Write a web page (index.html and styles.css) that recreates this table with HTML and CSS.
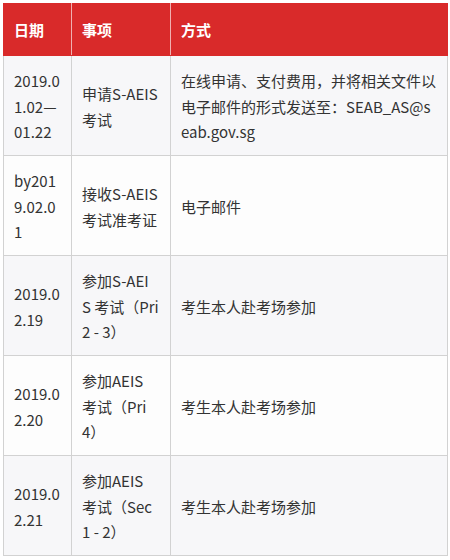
FILE: index.html
```html
<!DOCTYPE html>
<html lang="zh">
<head>
<meta charset="utf-8">
<link rel="stylesheet" href="styles.css">
</head>
<body>
<div class="wrap">
<table class="sched">
  <colgroup>
    <col class="c1"><col class="c2"><col class="c3">
  </colgroup>
  <thead>
    <tr><th>日期</th><th>事项</th><th>方式</th></tr>
  </thead>
  <tbody>
    <tr class="odd"><td>2019.01.02—01.22</td><td class="item">申请S-AEIS<br>考试</td><td>在线申请、支付费用，并将相关文件以电子邮件的形式发送至：SEAB_AS@seab.gov.sg</td></tr>
    <tr class="even"><td>by2019.02.01</td><td class="item">接收S-AEIS<br>考试准考证</td><td>电子邮件</td></tr>
    <tr class="odd"><td>2019.02.19</td><td class="item">参加S-AEI<br>S 考试（Pri<br>2 - 3）</td><td>考生本人赴考场参加</td></tr>
    <tr class="even"><td>2019.02.20</td><td class="item">参加AEIS<br>考试（Pri<br>4）</td><td>考生本人赴考场参加</td></tr>
    <tr class="odd"><td>2019.02.21</td><td class="item">参加AEIS<br>考试（Sec<br>1 - 2）</td><td>考生本人赴考场参加</td></tr>
  </tbody>
</table>
</div>
</body>
</html>
```

FILE: styles.css
```css
html, body {
  margin: 0;
  padding: 0;
  background: #fff;
}
.wrap {
  padding: 3px 3px 0 3px;
}
.sched {
  width: 444px;
  border-collapse: collapse;
  table-layout: fixed;
  font-family: "Noto Sans CJK SC", "Noto Sans", sans-serif;
  font-size: 15px;
  line-height: 25.5px;
  color: #333;
}
.c1 { width: 68px; }
.c2 { width: 99px; }
.c3 { width: 277px; }
.sched th,
.sched td {
  border: 1px solid #d2d2d2;
  padding: 0 10px;
  text-align: left;
  vertical-align: middle;
  word-break: break-all;
}
.sched th {
  background: #d92a2a;
  color: #fff;
  font-weight: bold;
  height: 51px;
  border-color: #d92a2a #f0b0b0 #d92a2a #f0b0b0;
}
.sched th:first-child { border-left-color: #d92a2a; }
.sched th:last-child { border-right-color: #d92a2a; }
.sched td {
  height: 97px;
  padding-top: 2px;
}
.sched td.item {
  white-space: nowrap;
}
.odd td { background: #f7f7f9; }
.even td { background: #fdfdfd; }
```
